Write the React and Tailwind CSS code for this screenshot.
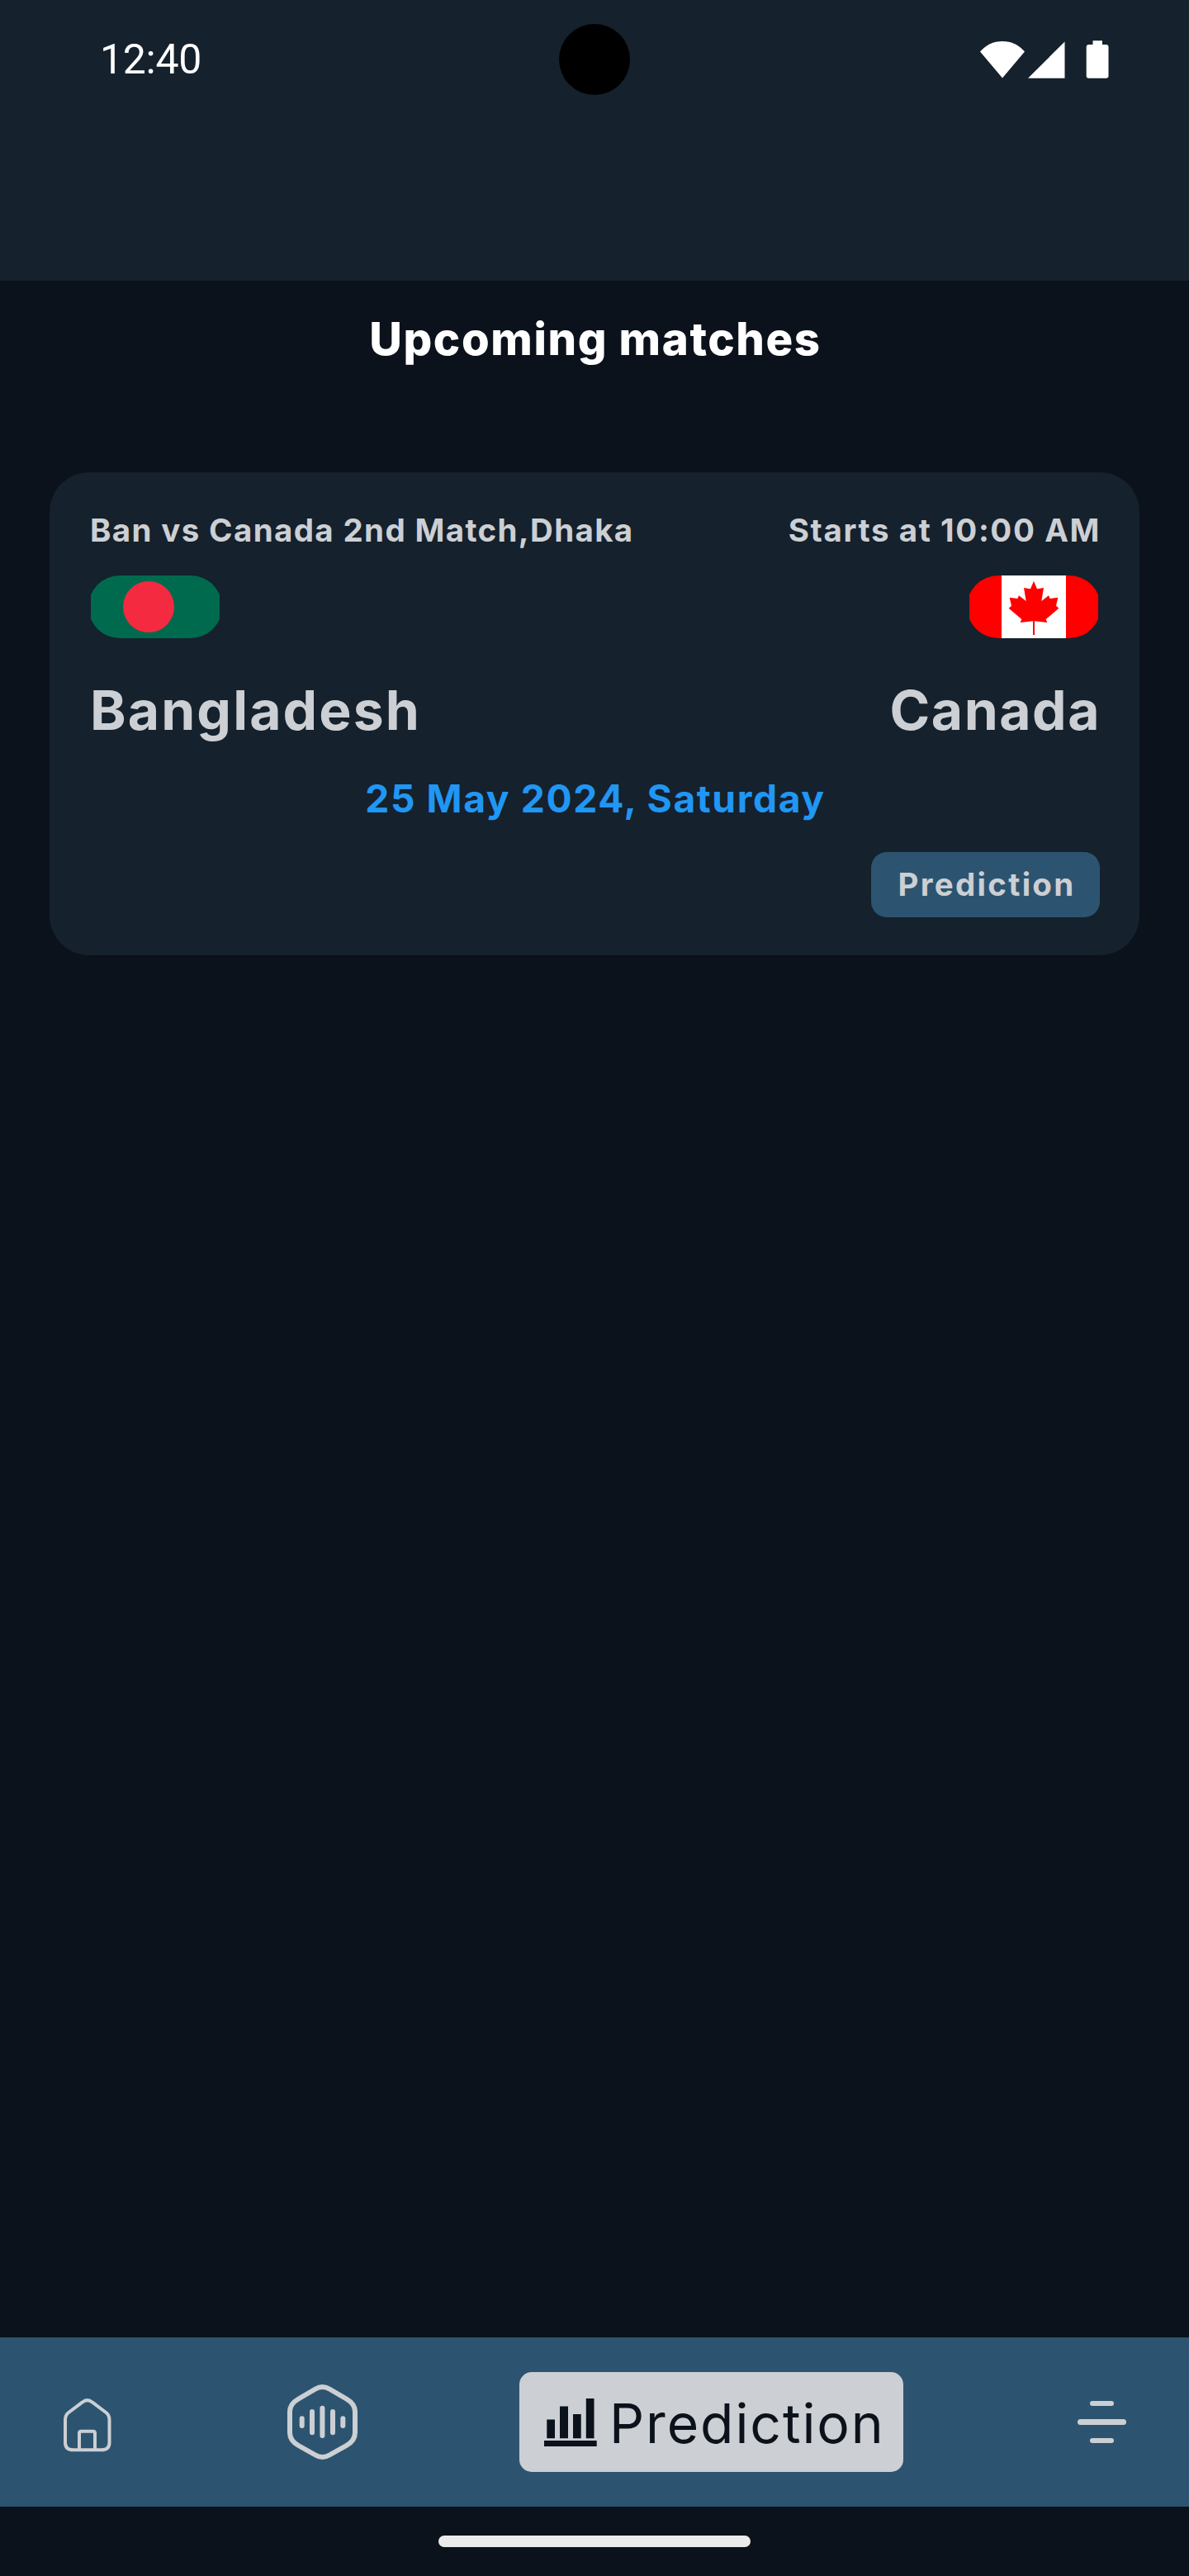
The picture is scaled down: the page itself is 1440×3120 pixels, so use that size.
import React from "react";

function StatusBar() {
  return (
    <div className="relative flex h-36 items-center justify-between pl-[121px] pr-[97px]">
      <span className="text-[50px] leading-none tracking-[-0.3px] text-white [font-family:Roboto,sans-serif]">12:40</span>
      <div className="absolute left-[677px] top-[29px] size-[86px] rounded-full bg-black" />
      <div className="flex items-end">
        <svg className="h-[46px] w-[54px]" viewBox="0 0 54 46" fill="#fff">
          <path d="M0 13.5C7 5.5 16 1 27 1s20 4.500 27 12.500L27 45.500Z" />
        </svg>
        <svg className="ml-[4px] h-[46px] w-[45px]" viewBox="0 0 45 46" fill="#fff">
          <path d="M44.500 1.500V45.700H0Z" />
        </svg>
        <svg className="ml-[25px] h-[46px] w-[28px]" viewBox="0 0 28 46" fill="#fff">
          <path d="M8.500 .2H20V5H24.500Q27.500 5 27.500 8V43Q27.500 45.700 24.500 45.700H3.500Q.7 45.700 .7 43V8Q.7 5 3.500 5H8.500Z" />
        </svg>
      </div>
    </div>
  );
}

function BangladeshFlag() {
  return (
    <div className="flex h-[76px] w-[156px] justify-center overflow-hidden">
      <div className="h-full w-[162px] shrink-0 overflow-hidden rounded-full bg-[#006a4e]">
        <svg className="h-full w-full" viewBox="0 0 162 76">
          <circle cx="73" cy="38" r="31" fill="#f42a41" />
        </svg>
      </div>
    </div>
  );
}

function CanadaFlag() {
  return (
    <div className="flex h-[76px] w-[156px] justify-center overflow-hidden">
      <div className="flex h-full w-[162px] shrink-0 justify-center overflow-hidden rounded-full bg-[#ff0000]">
        <svg className="h-full w-[156px]" viewBox="0 0 468 228">
          <rect x="117" width="234" height="228" fill="#fff" />
          <path
            fill="#f00"
            d="M234 20L246 49L270 45L262 93L288 73L293 84L322 80L315 110L325 119L278 159L283 171L237 166V216H231V166L185 171L190 159L143 119L153 110L146 80L175 84L180 73L206 93L198 45L222 49Z"
          />
        </svg>
      </div>
    </div>
  );
}

function MatchCard() {
  return (
    <section className="mx-[60px] mt-[92px] flex h-[585px] flex-col rounded-[48px] bg-[#15212c] px-[50px] pt-[50px] font-bold text-[#cccfd3]">
      <div className="-ml-[1px] flex h-10 items-center justify-between text-[38.5px] leading-none">
        <span className="tracking-[1.35px]">Ban vs Canada 2nd Match,Dhaka</span>
        <span className="-mr-[3px] tracking-[1.6px]">Starts at 10:00 AM</span>
      </div>
      <div className="mt-[35px] flex justify-between">
        <BangladeshFlag />
        <CanadaFlag />
      </div>
      <div className="-ml-[1px] mt-[47px] flex h-20 items-center justify-between text-[66px] leading-none">
        <span className="tracking-[2.1px]">Bangladesh</span>
        <span className="-mr-[3px] tracking-[1.5px]">Canada</span>
      </div>
      <p className="mt-[37px] flex h-[60px] items-center justify-center pl-[2px] text-[46.2px] leading-none tracking-[1.6px] text-[#2196f3]">
        25 May 2024, Saturday
      </p>
      <button className="-mr-[2px] mt-[35px] flex h-[79px] w-[277px] items-center justify-center self-end rounded-[19px] bg-[#2c5470] pl-[3px] text-[38.5px] leading-none tracking-[2.3px]">
        Prediction
      </button>
    </section>
  );
}

function HomeIcon() {
  return (
    <svg className="mt-[7px] h-[68px] w-[60px]" viewBox="0 0 60 68" fill="none" stroke="#cccfd3" strokeWidth="4">
      <path d="M23.500 6.700Q29.700 1.500 36 6.700L53 19.500Q56.500 22.500 56.500 28V55.500Q56.500 64.300 47 64.300H12.500Q3 64.300 3 55.500V28Q3 22.500 6.500 19.500Z" />
      <path d="M20 66V44Q20 41.700 22.500 41.700H36.500Q39 41.700 39 44V66" />
    </svg>
  );
}

function VoiceIcon() {
  return (
    <svg className="h-[95px] w-[90px]" viewBox="0 0 90 95" fill="none" stroke="#cccfd3" strokeWidth="6" strokeLinecap="round">
      <path d="M36 7.500Q44.400 2.500 53 7.500L73.500 19.500Q84 25.500 84 35V60.500Q84 70 73.500 76L53 87.500Q44.400 92.500 36 87.500L15.500 76Q5 70 5 60.500V35Q5 25.500 15.500 19.500Z" />
      <path d="M19.700 43.300V52M32 35V60.300M44.400 30.700V64M57 35V60.300M69.300 43.300V52" />
    </svg>
  );
}

function ChartIcon() {
  return (
    <svg className="h-[58px] w-[64px]" viewBox="0 0 64 58" fill="#0b121b">
      <path d="M0 51H63.700V58H0ZM3.300 25.500H13V48.300H3.300ZM19 9.500H29V48.300H19ZM35 19H44.700V48.300H35ZM50.800 0H60.500V48.300H50.800Z" />
    </svg>
  );
}

function BottomNav() {
  return (
    <nav className="flex h-[205px] items-center bg-[#2c5470] pl-[76px]">
      <HomeIcon />
      <div className="ml-[210px]">
        <VoiceIcon />
      </div>
      <div className="ml-[193px] flex h-[121px] w-[465px] items-center rounded-[15px] bg-[#cccfd3] pl-[30px]">
        <ChartIcon />
        <span className="ml-[15px] mt-[2px] text-[66px] leading-none tracking-[1.9px] text-[#0b121b]">Prediction</span>
      </div>
      <div className="ml-[211px] flex w-[59px] flex-col items-center gap-4">
        <div className="h-[6.500px] w-[29px] rounded-full bg-[#cccfd3]" />
        <div className="h-[6.500px] w-[59px] rounded-full bg-[#cccfd3]" />
        <div className="h-[6.500px] w-[29px] rounded-full bg-[#cccfd3]" />
      </div>
    </nav>
  );
}

export default function App() {
  return (
    <div className="flex h-[3120px] w-[1440px] flex-col overflow-hidden bg-[#0b121b] [font-family:Inter,sans-serif]">
      <header className="h-[340px] bg-[#15212c]">
        <StatusBar />
      </header>
      <main className="flex-1">
        <h1 className="flex h-[140px] items-center justify-center pl-[2px] text-[54.5px] font-extrabold leading-none tracking-[1.6px] text-white">
          Upcoming matches
        </h1>
        <MatchCard />
      </main>
      <BottomNav />
      <div className="flex h-[84px] justify-center pt-[35px]">
        <div className="h-[14px] w-[378px] rounded-full bg-[#ebebeb]" />
      </div>
    </div>
  );
}
